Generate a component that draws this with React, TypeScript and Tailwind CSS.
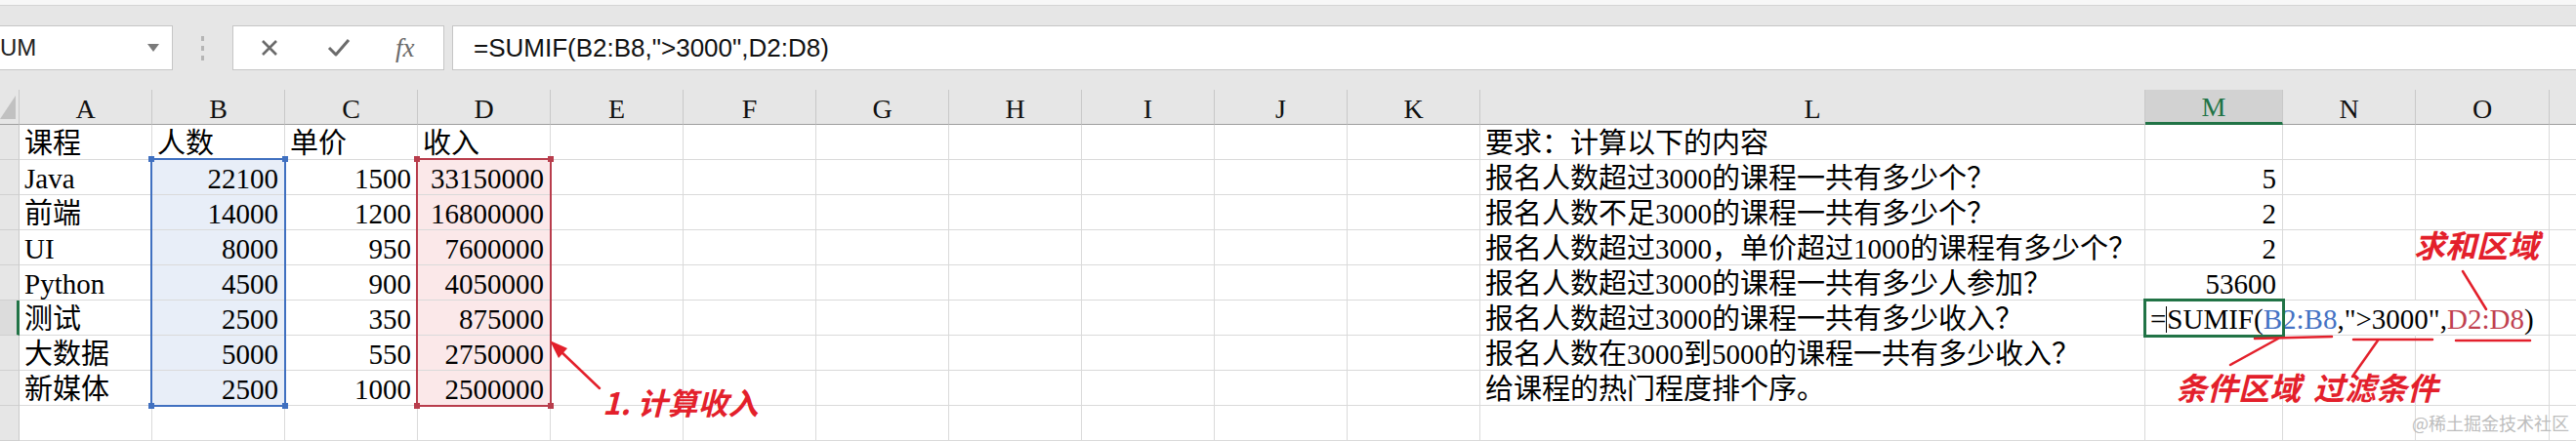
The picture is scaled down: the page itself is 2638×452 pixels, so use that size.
import React from "react";

type Col = { k: string; w: string };

const COLS: Col[] = [
  { k: "A", w: "w-[136px]" },
  { k: "B", w: "w-[136px]" },
  { k: "C", w: "w-[136px]" },
  { k: "D", w: "w-[136px]" },
  { k: "E", w: "w-[136px]" },
  { k: "F", w: "w-[136px]" },
  { k: "G", w: "w-[136px]" },
  { k: "H", w: "w-[136px]" },
  { k: "I", w: "w-[136px]" },
  { k: "J", w: "w-[136px]" },
  { k: "K", w: "w-[136px]" },
  { k: "L", w: "w-[681px]" },
  { k: "M", w: "w-[141px]" },
  { k: "N", w: "w-[136px]" },
  { k: "O", w: "w-[137px]" },
  { k: "P", w: "w-[200px]" },
];

// numbers are right aligned, text left aligned
const ROWS: Record<string, string>[] = [
  { A: "课程", B: "人数", C: "单价", D: "收入", L: "要求：计算以下的内容" },
  { A: "Java", B: "22100", C: "1500", D: "33150000", L: "报名人数超过3000的课程一共有多少个？", M: "5" },
  { A: "前端", B: "14000", C: "1200", D: "16800000", L: "报名人数不足3000的课程一共有多少个？", M: "2" },
  { A: "UI", B: "8000", C: "950", D: "7600000", L: "报名人数超过3000，单价超过1000的课程有多少个？", M: "2" },
  { A: "Python", B: "4500", C: "900", D: "4050000", L: "报名人数超过3000的课程一共有多少人参加？", M: "53600" },
  { A: "测试", B: "2500", C: "350", D: "875000", L: "报名人数超过3000的课程一共有多少收入？" },
  { A: "大数据", B: "5000", C: "550", D: "2750000", L: "报名人数在3000到5000的课程一共有多少收入？" },
  { A: "新媒体", B: "2500", C: "1000", D: "2500000", L: "给课程的热门程度排个序。" },
  {},
];

const isNum = (s: string) => /^\d+$/.test(s);

function FormulaInCell() {
  return (
    <span className="whitespace-nowrap">
      =
      <span className="inline-block w-[1px] h-[27px] bg-black align-[-4px]" />
      SUMIF(<span className="text-[#4472c4]">B2:B8</span>,"&gt;3000",
      <span className="text-[#c0404f]">D2:D8</span>)
    </span>
  );
}

function FormulaBar() {
  return (
    <>
      <div className="h-[6px] bg-[#f7f7f7] border-b border-[#d4d4d4]" />
      <div className="bg-[#e6e6e6] pt-[20px] pb-[20px] flex">
        <div className="w-[177px] h-[46px] shrink-0 bg-white border border-l-0 border-[#c6c6c6] flex items-center justify-between pr-[13px]">
          <span className="text-[24px] leading-none font-['Liberation_Sans',sans-serif] text-[#222]">UM</span>
          <svg width="12" height="8" viewBox="0 0 12 8">
            <path d="M0 0 L12 0 L6 8 Z" fill="#7a7a7a" />
          </svg>
        </div>
        <div className="w-[61px] shrink-0 flex flex-col items-center justify-center gap-[5px]">
          <span className="w-[3px] h-[5px] bg-[#b5b5b5]" />
          <span className="w-[3px] h-[5px] bg-[#b5b5b5]" />
          <span className="w-[3px] h-[5px] bg-[#b5b5b5]" />
        </div>
        <div className="w-[217px] h-[46px] shrink-0 bg-white border border-[#c6c6c6] flex items-center">
          <svg className="ml-[28px]" width="18" height="18" viewBox="0 0 18 18">
            <path d="M2 2 L16 16 M16 2 L2 16" stroke="#6b6b6b" strokeWidth="2.6" />
          </svg>
          <svg className="ml-[50px]" width="24" height="20" viewBox="0 0 24 20">
            <path d="M2 10 L9 17 L22 2" stroke="#6b6b6b" strokeWidth="3" fill="none" strokeLinejoin="round" />
          </svg>
          <span className="ml-[46px] text-[27px] leading-none italic font-['Liberation_Serif',serif] text-[#6b6b6b]">
            fx
          </span>
        </div>
        <div className="w-[8px] shrink-0" />
        <div className="flex-1 h-[46px] bg-white border border-r-0 border-[#c6c6c6] pl-[21px] flex items-center text-[26px] font-['Liberation_Sans',sans-serif] text-[#111]">
          =SUMIF(B2:B8,"&gt;3000",D2:D8)
        </div>
      </div>
    </>
  );
}

function HeaderRow() {
  return (
    <div className="flex h-[36px] bg-[#e6e6e6]">
      <div className="w-[20px] shrink-0 border-r border-b border-[#c8c8c8] border-b-[#9e9e9e] flex items-end">
        <svg width="19" height="35" viewBox="0 0 19 35">
          <path d="M16 6 L16 30 L0 30 Z" fill="#c1c1c1" />
        </svg>
      </div>
      {COLS.map((c) => {
        const active = c.k === "M";
        return (
          <div
            key={c.k}
            className={`${c.w} shrink-0 border-r flex items-end justify-center pb-[1px] text-[28px] leading-[29px] font-['Liberation_Serif',serif] ${
              active
                ? "bg-[#d2d2d2] border-[#c8c8c8] border-b-[3px] border-b-[#217346] text-[#217346]"
                : "border-[#c8c8c8] border-b border-b-[#9e9e9e] text-[#111]"
            }`}
          >
            {c.k === "P" ? "" : c.k}
          </div>
        );
      })}
    </div>
  );
}

function SheetRow({ row, idx }: { row: Record<string, string>; idx: number }) {
  const n = idx + 1;
  const activeRow = n === 6;
  return (
    <div className="flex h-[36px]">
      <div
        className={`w-[20px] shrink-0 border-b border-[#d0d0d0] ${
          activeRow ? "bg-[#dcdcdc] border-r-[3px] border-r-[#217346]" : "bg-[#e6e6e6] border-r border-r-[#c8c8c8]"
        }`}
      />
      {COLS.map((c) => {
        const v = row[c.k] ?? "";
        const inRange = n >= 2 && n <= 8;
        const bg = inRange && c.k === "B" ? "bg-[#e8eef8]" : inRange && c.k === "D" ? "bg-[#fbe8e9]" : "";
        const noRight = activeRow && c.k === "N" ? "border-r-transparent" : "";
        const align = isNum(v) ? "justify-end pr-[6px]" : "justify-start pl-[5px]";
        return (
          <div
            key={c.k}
            className={`${c.w} shrink-0 h-[36px] border-r border-b border-[#dadada] ${noRight} ${bg} flex items-end pb-[1px] ${align} whitespace-nowrap text-[29px] leading-[29px] text-black font-['Liberation_Serif','Noto_Sans_CJK_SC',serif]`}
          >
            {activeRow && c.k === "M" ? <FormulaInCell /> : v}
          </div>
        );
      })}
    </div>
  );
}

// range outline with the four corner squares laid out by flex
function RangeBox({ pos, color, dot }: { pos: string; color: string; dot: string }) {
  return (
    <div className={`absolute w-[139px] h-[255px] border-2 ${pos} ${color}`}>
      <div className="-m-[4px] h-[calc(100%+8px)] flex flex-col justify-between">
        <div className="flex justify-between">
          <span className={`w-[6px] h-[6px] ${dot}`} />
          <span className={`w-[6px] h-[6px] ${dot}`} />
        </div>
        <div className="flex justify-between">
          <span className={`w-[6px] h-[6px] ${dot}`} />
          <span className={`w-[6px] h-[6px] ${dot}`} />
        </div>
      </div>
    </div>
  );
}

const noteCls =
  "absolute leading-none font-bold italic text-[#e3202b] font-['Noto_Sans_CJK_SC',sans-serif] whitespace-nowrap";

export default function App() {
  return (
    <div className="relative w-[2638px] h-[452px] overflow-hidden bg-white">
      <FormulaBar />
      <HeaderRow />
      {ROWS.map((r, i) => (
        <SheetRow key={i} row={r} idx={i} />
      ))}

      {/* selected ranges */}
      <RangeBox pos="left-[154px] top-[162px]" color="border-[#4070c0]" dot="bg-[#4070c0]" />
      <RangeBox pos="left-[426px] top-[162px]" color="border-[#b83d4c]" dot="bg-[#b83d4c]" />

      {/* active cell M6 */}
      <div className="absolute left-[2195px] top-[306px] w-[145px] h-[40px] border-[3px] border-[#217346]" />

      {/* annotations drawn over the sheet */}
      <div className="absolute inset-0 pointer-events-none">
        <svg className="absolute left-0 top-0" width="2638" height="452" viewBox="0 0 2638 452">
          <g stroke="#e3202b" strokeWidth="2.5" fill="none" strokeLinecap="round">
            <line x1="614" y1="398" x2="572" y2="358" />
            <line x1="2309" y1="347" x2="2388" y2="345" />
            <line x1="2410" y1="348" x2="2491" y2="348" />
            <line x1="2515" y1="349" x2="2591" y2="349" />
            <line x1="2333" y1="347" x2="2284" y2="374" />
            <line x1="2435" y1="349" x2="2409" y2="386" />
            <line x1="2522" y1="278" x2="2546" y2="317" />
          </g>
          <polygon points="563,349 581,357 572,367" fill="#e3202b" />
        </svg>
        <span className={`${noteCls} left-[617px] top-[396px] text-[31px]`}>1. 计算收入</span>
        <span className={`${noteCls} left-[2472px] top-[234px] text-[32px]`}>求和区域</span>
        <span className={`${noteCls} left-[2228px] top-[380px] text-[32px]`}>条件区域</span>
        <span className={`${noteCls} left-[2369px] top-[380px] text-[32px]`}>过滤条件</span>
        <span className="absolute left-[2470px] top-[424px] text-[18px] leading-none text-[#bdbdbd] font-['Noto_Sans_CJK_SC',sans-serif] whitespace-nowrap">
          @稀土掘金技术社区
        </span>
      </div>
    </div>
  );
}
